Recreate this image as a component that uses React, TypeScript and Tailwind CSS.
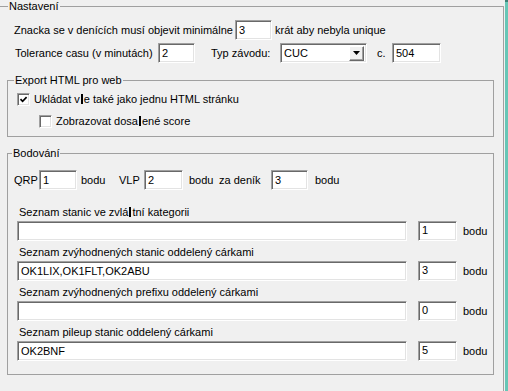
import React from "react";

const sunken =
  "bg-white border border-t-[#a0a0a0] border-l-[#a0a0a0] border-b-white border-r-white shadow-[inset_1px_1px_0_#696969,inset_-1px_-1px_0_#e3e3e3]";

function Field({ w, value, h = "h-[20px]" }: { w: string; value?: string; h?: string }) {
  return (
    <div className={`${w} ${h} ${sunken} flex items-center pl-[3px] shrink-0`}>
      <span className="leading-[13px]">{value}</span>
    </div>
  );
}

function Bar() {
  return <span className="inline-block w-[2px] h-[10px] bg-black align-[-1px] mx-[1px]" />;
}

function Check({ checked }: { checked?: boolean }) {
  return (
    <div className={`w-[13px] h-[13px] ${sunken} flex items-center justify-center shrink-0`}>
      {checked && (
        <svg width="9" height="9" viewBox="0 0 9 9">
          <polyline points="1.5,4.2 3.6,6.3 7.6,2.2" fill="none" stroke="#000" strokeWidth="1.7" />
        </svg>
      )}
    </div>
  );
}

function ListRow({ label, value, pts }: { label: React.ReactNode; value?: string; pts: string }) {
  return (
    <div className="flex flex-col">
      <div className="ml-[11px] h-[13px] leading-[13px] whitespace-nowrap">{label}</div>
      <div className="mt-[2px] flex items-center ml-[9px]">
        <Field w="w-[390px]" value={value} />
        <div className="ml-[11px] -mt-[1px]">
          <Field w="w-[39px]" value={pts} />
        </div>
        <span className="ml-[6px]">bodu</span>
      </div>
    </div>
  );
}

export default function App() {
  return (
    <div className="flex h-[391px] w-[508px] overflow-hidden bg-[#f0f0f0] text-[11px] leading-[13px] text-black font-['Liberation_Sans',Arial,sans-serif]">
      <div className="w-[505px] h-full overflow-hidden">
        <fieldset className="ml-[-2px] w-[506px] h-[420px] border border-[#a0a0a0]">
          <legend className="ml-[9px] px-[1px] leading-[13px]">Nastavení</legend>

          {/* row 1 */}
          <div className="mt-[7px] flex items-center h-[20px]">
            <span className="pl-[15px] w-[236px] whitespace-nowrap">Znacka se v denících musí objevit minimálne</span>
            <Field w="w-[37px]" value="3" />
            <span className="ml-[3px] whitespace-nowrap">krát aby nebyla unique</span>
          </div>

          {/* row 2 */}
          <div className="mt-[3px] flex items-center h-[20px]">
            <span className="pl-[16px] w-[159px] whitespace-nowrap">Tolerance casu (v minutách)</span>
            <Field w="w-[37px]" value="2" />
            <span className="ml-[16px] w-[69px] whitespace-nowrap">Typ závodu:</span>
            <div className={`w-[87px] h-[20px] ${sunken} flex items-center justify-between pl-[3px] pr-[2px]`}>
              <span>CUC</span>
              <div className="w-[15px] h-[15px] bg-[#f0f0f0] border border-t-white border-l-white border-b-[#696969] border-r-[#696969] shadow-[inset_-1px_-1px_0_#a0a0a0] flex items-center justify-center">
                <svg width="7" height="4" viewBox="0 0 7 4">
                  <polygon points="0,0 7,0 3.5,4" fill="#000" />
                </svg>
              </div>
            </div>
            <span className="ml-[10px] w-[15px]">c.</span>
            <Field w="w-[49px]" value="504" />
          </div>

          {/* Export HTML */}
          <fieldset className="mt-[11px] ml-[8px] w-[487px] h-[63px] border border-[#a0a0a0]">
            <legend className="ml-[6px] px-[1px] leading-[13px]">Export HTML pro web</legend>
            <div className="mt-[6px] ml-[9px] flex items-center h-[13px] gap-[4px]">
              <Check checked />
              <span className="whitespace-nowrap">
                Ukládat v<Bar />e také jako jednu HTML stránku
              </span>
            </div>
            <div className="mt-[9px] ml-[31px] flex items-center h-[13px] gap-[4px]">
              <Check />
              <span className="whitespace-nowrap">
                Zobrazovat dosa<Bar />ené score
              </span>
            </div>
          </fieldset>

          {/* Bodování */}
          <fieldset className="mt-[10px] ml-[8px] w-[487px] h-[228px] border border-[#a0a0a0]">
            <legend className="ml-[4px] px-[1px] leading-[13px]">Bodování</legend>
            <div className="mt-[10px] flex items-center h-[20px] whitespace-nowrap">
              <span className="pl-[6px] w-[31px]">QRP</span>
              <Field w="w-[38px]" value="1" />
              <span className="ml-[4px] w-[38px]">bodu</span>
              <span className="w-[25px]">VLP</span>
              <Field w="w-[39px]" value="2" />
              <span className="ml-[6px] w-[30px]">bodu</span>
              <span className="w-[52px]">za deník</span>
              <Field w="w-[37px]" value="3" />
              <span className="ml-[7px]">bodu</span>
            </div>

            <div className="mt-[16px] flex flex-col gap-[5px]">
              <ListRow label={<>Seznam stanic ve zvlá<Bar />tní kategorii</>} pts="1" />
              <ListRow label="Seznam zvýhodnených stanic oddelený cárkami" value="OK1LIX,OK1FLT,OK2ABU" pts="3" />
              <ListRow label="Seznam zvýhodnených prefixu oddelený cárkami" pts="0" />
              <ListRow label="Seznam pileup stanic oddelený cárkami" value="OK2BNF" pts="5" />
            </div>
          </fieldset>
        </fieldset>
      </div>
      <div className="w-[3px] h-full bg-[#66c6b6] border-t-[2px] border-[#3d7f76]" />
    </div>
  );
}
